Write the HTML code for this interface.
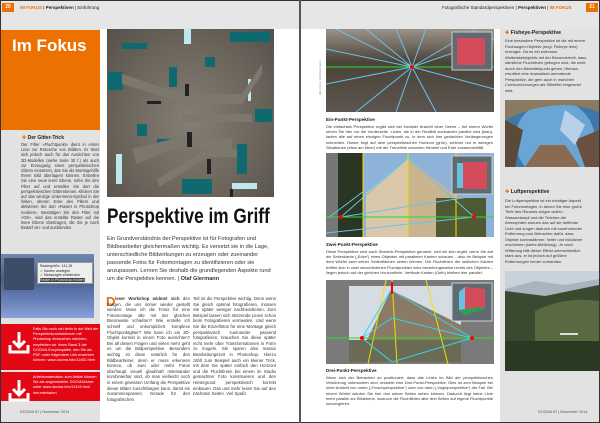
<!DOCTYPE html>
<html><head><meta charset="utf-8"><style>
*{margin:0;padding:0;box-sizing:border-box}
body{width:600px;height:423px;background:#fff;font-family:"Liberation Sans",sans-serif;position:relative;overflow:hidden}
.a{position:absolute}
.t{font-size:4.3px;line-height:5.6px;color:#333;text-align:justify}
.hd{font-size:5px;font-weight:bold;color:#222}
</style></head><body>
<div class="a" style="left:0;top:0;width:600px;height:423px;border:1px solid #333"></div>
<div class="a" style="left:1px;top:1px;width:298px;height:28px;background:#e6e6e6"></div>
<div class="a" style="left:301px;top:1px;width:298px;height:28px;background:#e6e6e6"></div>
<div class="a" style="left:299px;top:0;width:2px;height:423px;background:#555"></div>
<div class="a" style="left:2px;top:3px;width:12px;height:9px;background:#ec6f00;color:#fff;font-size:5px;font-weight:bold;text-align:center;line-height:9px">20</div>
<div class="a" style="left:20px;top:5px;font-size:4.5px;color:#222"><b style="color:#ec6f00">IM FOKUS</b> | <b>Perspektiven</b> | Einführung</div>
<div class="a" style="left:586px;top:3px;width:12px;height:9px;background:#ec6f00;color:#fff;font-size:5px;font-weight:bold;text-align:center;line-height:9px">21</div>
<div class="a" style="left:442px;top:5px;font-size:4.5px;color:#222">Fotografische Standardperspektiven | <b>Perspektiven</b> | <b style="color:#ec6f00">IM FOKUS</b></div>
<div class="a" style="left:1px;top:29px;width:99px;height:393px;background:#e2e2e2"></div>
<div class="a" style="left:1px;top:30px;width:99px;height:100px;background:#ec7100"></div>
<div class="a" style="left:12px;top:36px;color:#fff;font-size:17px;font-weight:bold">Im Fokus</div>
<div class="a hd" style="left:22px;top:135px"><span style="color:#ec6f00">✚</span> Der Gitter-Trick</div>
<div class="a t" style="left:21px;top:142px;width:78px;font-size:4.1px;line-height:5.2px">Der Filter »Fluchtpunkt« dient in erster Linie zur Retusche von Bildern. Er lässt sich jedoch auch für das Ausrichten von 3D-Modellen (siehe Seite 30 f.) als auch zur Erzeugung eines perspektivischen Gitters einsetzen, das Sie als Montagehilfe Ihrem Bild überlagern können. Erstellen Sie eine neue leere Ebene, rufen Sie den Filter auf und erstellen Sie dort die perspektivischen Gitterebenen. Klicken Sie auf das winzige Untermenü-Symbol in der linken, oberen Ecke des Filters und aktivieren Sie dort »Raster in Photoshop rendern«. Bestätigen Sie den Filter mit »OK«, wird das erstellte Raster auf die leere Ebene übertragen, die Sie je nach Bedarf ein- und ausblenden.</div>
<div class="a" style="left:1px;top:254px;width:93px;height:64px;background:linear-gradient(180deg,#7088b0 0%,#4a5f88 40%,#5f78b0 65%,#8aa0d8 100%)"></div>
<div class="a" style="left:4px;top:258px;width:30px;height:32px;background:#3d4d68"></div>
<div class="a" style="left:37px;top:262px;width:56px;height:22px;background:#eee;border:1px solid #999;font-size:3.5px;line-height:4.5px;padding:1px 2px;color:#222">Rastergröße: 141,18<br>✓ Kanten anzeigen<br>✓ Messungen einblenden<br><span style="background:#444;color:#eee">Raster in Photoshop rendern</span></div>
<div class="a" style="left:1px;top:324px;width:99px;height:46px;background:#e30613"></div>
<div class="a" style="left:1px;top:372px;width:99px;height:29px;background:#e30613"></div>
<svg class="a" style="left:8px;top:332px" width="22" height="80" viewBox="0 0 22 80"><g fill="none" stroke="#fff" stroke-width="3"><path d="M11 0v14M5 9l6 6 6-6M2 13v7h18v-7"/><path d="M11 48v14M5 57l6 6 6-6M2 61v7h18v-7"/></g></svg>
<div class="a" style="left:33px;top:327px;width:66px;font-size:3.8px;line-height:5.2px;color:#fff">Falls Sie noch viel tiefer in die Welt der Perspektivkonstruktionen mit Photoshop eintauchen möchten, empfehlen wir Ihnen Band 3 der DOCMA-Enzyklopädie, den Sie als PDF unter folgendem Link erwerben können: www.docma.info/11450.html</div>
<div class="a" style="left:33px;top:375px;width:66px;font-size:3.8px;line-height:5.2px;color:#fff">Arbeitsmaterialien zum Artikel können Sie als angemeldeter DOCMAkUser unter www.docma.info/11449.html herunterladen.</div>
<div class="a" style="left:20px;top:410px;font-size:3.8px;color:#555">DOCMA 67 | November 2014</div>
<div class="a" style="left:107px;top:29px;width:167px;height:168px;background:radial-gradient(ellipse at 50% 55%,#857e73 0%,#6a645b 60%,#55504a 100%)"></div>
<svg class="a" style="left:107px;top:29px" width="167" height="168" viewBox="0 0 167 168"><g fill="#0f6a70"><rect x="15" y="14" width="25" height="6"/><rect x="123" y="3" width="40" height="10"/><rect x="1" y="43" width="15" height="18"/><rect x="62" y="38" width="8" height="20"/><rect x="98" y="28" width="10" height="10"/><rect x="148" y="80" width="17" height="13"/><rect x="30" y="95" width="10" height="12"/><rect x="50" y="110" width="25" height="10"/><rect x="75" y="150" width="30" height="15"/><rect x="130" y="115" width="10" height="30"/></g><g fill="#bfe8ee"><rect x="77" y="0" width="7" height="15"/><rect x="9" y="125" width="6" height="30"/><rect x="104" y="112" width="4" height="15"/><rect x="125" y="154" width="25" height="6"/><rect x="141" y="50" width="3" height="22"/></g><g fill="#7d776d"><path d="M15 45l60 20h60l20-30v10l-20 30H80l-65-20z"/><path d="M25 120l40-10h60v10H65l-35 15z"/><path d="M75 85h70v8H75z"/><path d="M50 150l50-30h30v8h-28l-50 30z"/></g><g fill="#222"><rect x="80" y="103" width="5" height="15"/><rect x="100" y="130" width="4" height="15"/><rect x="123" y="160" width="3" height="8"/><rect x="40" y="72" width="14" height="3"/><rect x="78" y="55" width="4" height="12"/></g></svg>
<div class="a" style="left:107px;top:205px;font-size:21px;font-weight:bold;color:#111;transform:scaleX(.82);transform-origin:0 0;white-space:nowrap">Perspektive im Griff</div>
<div class="a" style="left:107px;top:235px;width:170px;font-size:5.6px;line-height:8px;color:#333">Ein Grundverständnis der Perspektive ist für Fotografen und Bildbearbeiter gleichermaßen wichtig. Es versetzt sie in die Lage, unterschiedliche Bildwirkungen zu erzeugen oder zueinander passende Fotos für Fotomontagen zu identifizieren oder sie anzupassen. Lernen Sie deshalb die grundlegenden Aspekte rund um die Perspektive kennen. | <b>Olaf Giermann</b></div>
<div class="a" style="left:106px;top:294px;font-size:13px;font-weight:bold;color:#ec6f00">D</div>
<div class="a t" style="left:107px;top:296px;width:83px;text-indent:8px"><b>ieser Workshop widmet sich</b> den Fragen, die uns immer wieder gestellt werden: Muss ich die Fotos für eine Fotomontage alle mit der gleichen Brennweite schießen? Wie erstelle ich schnell und unkompliziert komplexe Fluchtpunktgitter? Wie kann ich ein 3D-Objekt korrekt in einem Foto ausrichten? Bei all diesen Fragen und vielen mehr geht es um die Bildperspektive. Besonders wichtig ist diese natürlich für den Bildbearbeiter, denn er muss erkennen können, ob zwei oder mehr Fotos überhaupt visuell glaubhaft miteinander kombinierbar sind, ob man vielleicht noch in einem gewissen Umfang die Perspektive dieser Bilder zurechtbiegen kann, damit sie zusammenpassen. Gerade für den fotografischen</div>
<div class="a t" style="left:193px;top:296px;width:83px">Teil ist die Perspektive wichtig. Denn wenn Sie gleich optimal fotografieren, müssen Sie später weniger nachbearbeiten. Zum Beispiel lassen sich stürzende Linien schon beim Fotografieren vermeiden. Und wenn Sie die Einzelfotos für eine Montage gleich perspektivisch zueinander passend fotografieren, brauchen Sie diese später nicht mehr über Transformationen in Form zu mogeln. Sie sparen also massiv Bearbeitungszeit in Photoshop. Hierzu zählt zum Beispiel auch ein kleiner Trick, mit dem Sie später einfach den Horizont und die Fluchtlinien bei einem im Studio gemachten Foto konstruieren und den Hintergrund perspektivisch korrekt einbauen. Das und mehr lesen Sie auf den nächsten Seiten. Viel Spaß!</div>
<div class="a" style="left:500px;top:29px;width:99px;height:393px;background:#e2e2e2"></div>
<svg class="a" style="left:326px;top:29px" width="168" height="83" viewBox="0 0 168 83"><defs><linearGradient id="g1" x1="0" y1="0" x2="0" y2="1"><stop offset="0" stop-color="#9a9288"/><stop offset=".4" stop-color="#4a4338"/><stop offset="1" stop-color="#5b5650"/></linearGradient></defs><rect width="168" height="83" fill="url(#g1)"/><g stroke="#6ec0e8" stroke-width="1"><path d="M86 38L10 0M86 38L40 0M86 38L70 0M86 38L100 0M86 38L0 20M86 38L0 55M86 38L30 83M86 38L70 83M86 38L110 83M86 38L168 60M86 38L168 10M86 38L150 0"/></g><path d="M0 38H168" stroke="#2ddc2d" stroke-width="1"/><circle cx="86" cy="38" r="2" fill="#f00"/><rect x="126" y="3" width="40" height="38" fill="#5f6b70" stroke="#ccc"/><rect x="131" y="9" width="28" height="27" fill="#d44c5c"/></svg>
<div class="a hd" style="left:326px;top:117px;font-size:4.6px">Ein-Punkt-Perspektive</div>
<div class="a t" style="left:326px;top:124px;width:167px;font-size:4px;line-height:5.2px">Die einfachste Perspektive ergibt sich bei frontaler Ansicht einer Szene – bei einem Würfel sehen Sie hier nur die Vorderseite. Linien, die in der Realität zueinander parallel sind (blau), laufen alle auf einen einzigen Fluchtpunkt zu, in dem sich ihre gedachten Verlängerungen schneiden. Dieser liegt auf dem perspektivischen Horizont (grün), welcher nur in wenigen Situationen (etwa am Meer) mit der Trennlinie zwischen Himmel und Erde zusammenfällt.</div>
<svg class="a" style="left:326px;top:153px" width="168" height="84" viewBox="0 0 168 84"><rect width="168" height="84" fill="#777"/><rect x="12" y="0" width="156" height="84" fill="#8fb3d8"/><rect x="12" y="0" width="25" height="84" fill="#2a3522"/><path d="M40 84V40L82 5l50 40v39z" fill="#d8c7a8"/><path d="M82 5l50 40v39H82z" fill="#c9b490"/><rect x="110" y="45" width="50" height="39" fill="#4f5a35"/><g stroke="#6ec0e8"><path d="M15 64L82 5M15 64L168 40M148 64L82 5M148 64L0 80M82 5l-80 60"/></g><g stroke="#f0e000" stroke-width="1"><path d="M37 0v84M82 0v84M130 0v84"/></g><path d="M0 64H168" stroke="#2ddc2d"/><circle cx="15" cy="64" r="2" fill="#f00"/><circle cx="148" cy="64" r="2" fill="#f00"/><rect x="126" y="3" width="40" height="38" fill="#5f6b70" stroke="#ccc"/><path d="M131 10h6v25h-6z" fill="#6ac0e0"/><rect x="137" y="9" width="24" height="27" fill="#d44c5c"/></svg>
<div class="a hd" style="left:326px;top:242px;font-size:4.6px">Zwei-Punkt-Perspektive</div>
<div class="a t" style="left:326px;top:249px;width:167px;font-size:4px;line-height:5.2px">Diese Perspektive wird auch Übereck-Perspektive genannt, weil sie sich ergibt, wenn Sie auf die Seitenkante („Ecke“) eines Objektes mit parallelen Kanten schauen – also im Beispiel mit dem Würfel zwei seiner Seitenflächen sehen können. Die Fluchtlinien der seitlichen Kanten treffen sich in zwei verschiedenen Fluchtpunkten links beziehungsweise rechts des Objektes – liegen jedoch auf der gleichen Horizontlinie. Vertikale Kanten (Gelb) bleiben hier parallel.</div>
<svg class="a" style="left:326px;top:280px" width="168" height="84" viewBox="0 0 168 84"><rect width="168" height="84" fill="#7a7a7a"/><rect x="23" y="6" width="112" height="76" fill="#d6dce4"/><path d="M40 62L65 10l70 35v37H40z" fill="#8a7a66"/><rect x="23" y="60" width="112" height="22" fill="#6b6a55"/><g stroke="#f0e000"><path d="M60 0L42 84M66 0l5 84M100 0l22 84"/></g><g stroke="#32d8e8" fill="none"><path d="M36 58L65 10l81 48zM36 58l30-20 80 20M36 58l30 24 80-24"/></g><path d="M0 58H168" stroke="#2ddc2d"/><circle cx="36" cy="58" r="2" fill="#f00"/><circle cx="146" cy="58" r="2" fill="#f00"/><path d="M66 14V2" stroke="#f00" stroke-width="2"/><rect x="126" y="3" width="40" height="38" fill="#5f6b70" stroke="#ccc"/><path d="M133 12l6-5 20 2v20l-20 6-6-5z" fill="#d44c5c"/><path d="M133 12l6-5v28l-6-5z" fill="#6ac0e0"/><path d="M133 30l6 5 20-6-4-2z" fill="#2aa050"/></svg>
<div class="a hd" style="left:326px;top:368px;font-size:4.6px">Drei-Punkt-Perspektive</div>
<div class="a t" style="left:326px;top:375px;width:167px;font-size:4px;line-height:5.2px">Wenn sich der Betrachter so positioniert, dass alle Linien im Bild der perspektivischen Verkürzung unterworfen sind, entsteht eine Drei-Punkt-Perspektive. Dies ist zum Beispiel bei einer Ansicht von unten („Froschperspektive“) oder von oben („Vogelperspektive“) der Fall. Bei einem Würfel würden Sie hier drei seiner Seiten sehen können. Dadurch liegt keine Linie mehr parallel zur Bildebene, wodurch die Fluchtlinien aller drei Seiten auf eigene Fluchtpunkte konvergieren.</div>
<div class="a hd" style="left:505px;top:30px;font-size:5.2px"><span style="color:#ec6f00">✚</span> Fisheye-Perspektive</div>
<div class="a t" style="left:505px;top:38px;width:82px;font-size:4px;line-height:5.5px;text-align:left">Eine besondere Perspektive ist die mit einem Fischaugen-Objektiv (engl. Fisheye lens) erzeugte. Da es ein extremes Weitwinkelobjektiv mit der Besonderheit, dass sämtliche Fluchtlinien gebogen sind, die nicht durch den Bildmittelpunkt gehen. Hieraus resultiert eine dramatisch anmutende Perspektive, die gern auch in manchen Comiczeichnungen als Stilmittel eingesetzt wird.</div>
<svg class="a" style="left:505px;top:100px" width="94" height="67" viewBox="0 0 94 67"><rect width="94" height="67" fill="#3f78a8"/><circle cx="50" cy="40" r="40" fill="#6aa5d5"/><path d="M0 0h94v12Q50 -5 0 20z" fill="#8a7a60"/><path d="M0 20L18 30 10 67H0z" fill="#5a4a38"/><path d="M94 30L70 40 80 67h14z" fill="#6a5040"/><path d="M20 67L35 45 60 45 75 67z" fill="#8a6a50"/><path d="M60 10L80 25 70 45 55 30z" fill="#b8d0e8"/></svg>
<div class="a hd" style="left:505px;top:189px;font-size:5.2px"><span style="color:#ec6f00">✚</span> Luftperspektive</div>
<div class="a t" style="left:505px;top:198px;width:82px;font-size:4px;line-height:5.5px;text-align:left">Die Luftperspektive ist ein wichtiger Aspekt bei Fotomontagen, in denen Sie eine große Tiefe des Raumes zeigen wollen. Wasserdampf und die Teilchen der Atmosphäre streuen das auf sie treffende Licht und sorgen dadurch mit zunehmender Entfernung vom Betrachter dafür, dass Objekte kontrastärmer, heller und bläulicher erscheinen (siehe Abbildung). Je nach Witterung fällt dieser Effekt unterschiedlich stark aus, er ist jedoch auf größere Entfernungen immer vorhanden.</div>
<svg class="a" style="left:505px;top:271px" width="94" height="100" viewBox="0 0 94 100"><rect width="94" height="100" fill="#c8d2da"/><path d="M0 18L30 10 60 14 94 8V30H0z" fill="#a8b4be"/><path d="M0 20L40 25 94 14V100H0z" fill="#3a4a30"/><path d="M30 40Q60 25 94 30V70H30z" fill="#5a6a40"/><path d="M0 70h94v30H0z" fill="#2a3a22"/><rect x="55" y="62" width="18" height="2" fill="#ddd"/></svg>
<div class="a" style="left:538px;top:410px;font-size:3.8px;color:#555">DOCMA 67 | November 2014</div>
<div class="a" style="left:318px;top:95px;font-size:3px;color:#888;transform:rotate(-90deg);transform-origin:0 0">Alle Fotos: Olaf Giermann</div>
</body></html>
